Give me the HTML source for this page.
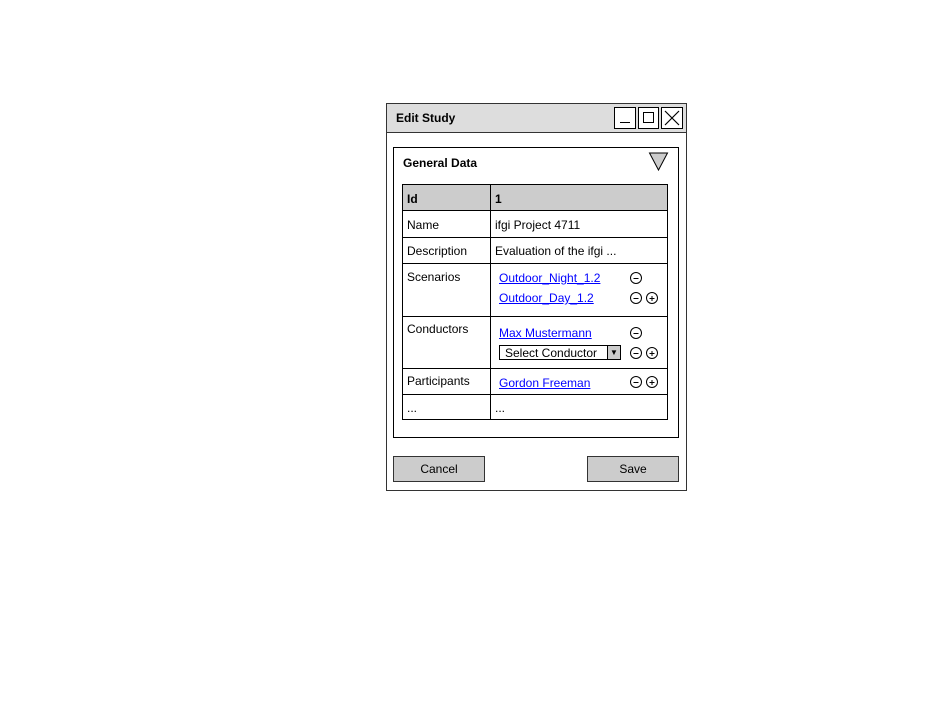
<!DOCTYPE html>
<html><head><style>
body{margin:0;width:937px;height:707px;background:#fff;position:relative;overflow:hidden;font-family:"Liberation Sans",sans-serif;font-size:12px;color:#000}
.a{position:absolute;box-sizing:border-box}
.t{position:absolute;white-space:nowrap;line-height:14px}
.l{color:#00f;text-decoration:underline}
.hl{position:absolute;left:402px;width:266px;height:1px;background:#000}
</style></head><body>
<div class="a" style="left:386px;top:103px;width:301px;height:388px;border:1px solid #333;background:#fff"></div>
<div class="a" style="left:386px;top:103px;width:301px;height:30px;border:1px solid #333;background:#ddd"></div>
<div class="t" style="left:396px;top:111px;font-weight:bold">Edit Study</div>
<div class="a" style="left:614px;top:107px;width:22px;height:22px;border:1px solid #000;background:#fff"><div class="a" style="left:5px;top:14px;width:10px;height:1px;background:#000"></div></div>
<div class="a" style="left:638px;top:107px;width:21px;height:22px;border:1px solid #000;background:#fff"><div class="a" style="left:4px;top:4px;width:11px;height:11px;border:1px solid #000"></div></div>
<div class="a" style="left:661px;top:107px;width:22px;height:22px;border:1px solid #000;background:#fff"><svg width="20" height="20" style="position:absolute;left:0;top:0"><path d="M3 3L17 17M17 3L3 17" stroke="#000" stroke-width="1.2"/></svg></div>
<div class="a" style="left:393px;top:147px;width:286px;height:291px;border:1px solid #000"></div>
<div class="t" style="left:403px;top:156px;font-weight:bold">General Data</div>
<svg class="a" style="left:648px;top:151px" width="21" height="21"><path d="M1.5 2L19.5 2L10.5 19Z" fill="#ccc" stroke="#000"/></svg>
<div class="a" style="left:402px;top:184px;width:266px;height:236px;border:1px solid #000"></div>
<div class="a" style="left:403px;top:185px;width:264px;height:25px;background:#ccc"></div>
<div class="hl" style="top:210px"></div><div class="hl" style="top:237px"></div><div class="hl" style="top:263px"></div><div class="hl" style="top:316px"></div><div class="hl" style="top:368px"></div><div class="hl" style="top:394px"></div>
<div class="a" style="left:490px;top:184px;width:1px;height:236px;background:#000"></div>
<div class="t" style="left:407px;top:192px;font-weight:bold">Id</div>
<div class="t" style="left:495px;top:192px;font-weight:bold">1</div>
<div class="t" style="left:407px;top:218px">Name</div><div class="t" style="left:495px;top:218px">ifgi Project 4711</div>
<div class="t" style="left:407px;top:244px">Description</div><div class="t" style="left:495px;top:244px">Evaluation of the ifgi ...</div>
<div class="t" style="left:407px;top:270px">Scenarios</div>
<div class="t l" style="left:499px;top:271px">Outdoor_Night_1.2</div>
<div class="t l" style="left:499px;top:291px">Outdoor_Day_1.2</div>
<div class="t" style="left:407px;top:322px">Conductors</div>
<div class="t l" style="left:499px;top:326px">Max Mustermann</div>
<div class="a" style="left:499px;top:345px;width:122px;height:15px;border:1px solid #000;background:#fff"></div>
<div class="t" style="left:505px;top:346px">Select Conductor</div>
<div class="a" style="left:607px;top:345px;width:14px;height:15px;border:1px solid #000;background:#ccc;font-size:8px;text-align:center;line-height:13px">▼</div>
<div class="t" style="left:407px;top:374px">Participants</div>
<div class="t l" style="left:499px;top:376px">Gordon Freeman</div>
<svg class="a" style="left:0;top:0" width="937" height="707" fill="none" stroke="#000" stroke-width="1">
<g id="m"><circle cx="636" cy="278" r="5.5"/><path d="M633.5 278.5h5"/></g>
<circle cx="636" cy="298" r="5.5"/><path d="M633.5 298.5h5"/>
<circle cx="652" cy="298" r="5.5"/><path d="M649.5 298.5h5M652 296v5"/>
<circle cx="636" cy="333" r="5.5"/><path d="M633.5 333.5h5"/>
<circle cx="636" cy="353" r="5.5"/><path d="M633.5 353.5h5"/>
<circle cx="652" cy="353" r="5.5"/><path d="M649.5 353.5h5M652 351v5"/>
<circle cx="636" cy="382" r="5.5"/><path d="M633.5 382.5h5"/>
<circle cx="652" cy="382" r="5.5"/><path d="M649.5 382.5h5M652 380v5"/>
</svg>
<div class="t" style="left:407px;top:401px">...</div><div class="t" style="left:495px;top:401px">...</div>
<div class="a" style="left:393px;top:456px;width:92px;height:26px;border:1px solid #333;background:#ccc;text-align:center;line-height:25px">Cancel</div>
<div class="a" style="left:587px;top:456px;width:92px;height:26px;border:1px solid #333;background:#ccc;text-align:center;line-height:25px">Save</div>
</body></html>
